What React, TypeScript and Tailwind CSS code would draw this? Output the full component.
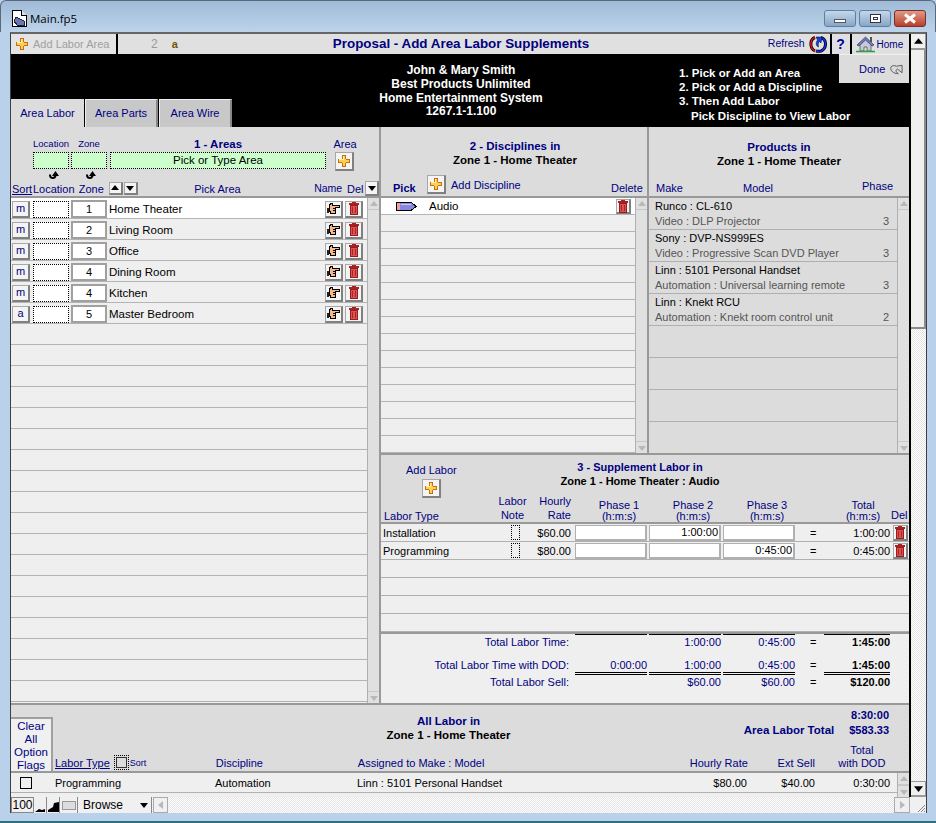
import React from "react";

const NAVY = "text-[#000080]";

function Plus({ s = 15 }: { s?: number }) {
  return (
    <svg width={s} height={s} viewBox="0 0 15 15" shapeRendering="crispEdges">
      <path d="M5.500 1.500h4v4h4v4h-4v4h-4v-4h-4v-4h4z" fill="#ffd050" stroke="#c4680e" />
      <path d="M6.500 2.500h1v4h-5v-1h4z" fill="#fff2b0" />
    </svg>
  );
}
function Trash() {
  return (
    <svg width="12" height="13" viewBox="0 0 12 13" shapeRendering="crispEdges">
      <path d="M4 0h4v1h3v2H1V1h3z" fill="#a82020" />
      <path d="M2.500 3.500h7v9h-7z" fill="#e05050" stroke="#902020" />
      <path d="M4 5h1v6H4zM7 5h1v6H7z" fill="#a82828" />
    </svg>
  );
}
function Hand() {
  return (
    <svg width="13" height="12" viewBox="0 0 13 12" shapeRendering="crispEdges">
      <path d="M3.500 0.500h2v2h7v2h-4v6h-5v-2h-1v-6z" fill="#f6b888" stroke="#000" />
      <path d="M0 5h2v5H0z" fill="#222" />
      <path d="M6 5.500h2M6 7.500h2" stroke="#000" />
    </svg>
  );
}
function Bevel({ w = 18, h = 18, children }: { w?: number; h?: number; children?: React.ReactNode }) {
  return (
    <div
      className="flex shrink-0 items-center justify-center bg-[#f4f4f4] border border-[#a8a8a8] border-b-2 border-r-2 border-b-[#808080] border-r-[#808080]"
      style={{ width: w, height: h }}
    >
      {children}
    </div>
  );
}
function Tri({ dir = "up", c = "#b8b8b8", s = 8 }: { dir?: "up" | "down" | "left" | "right"; c?: string; s?: number }) {
  const d = { up: "M4 1l4 5H0z", down: "M0 2h8L4 7z", left: "M6 0v8L1 4z", right: "M2 0v8l5-4z" }[dir];
  return (
    <svg width={s} height={s} viewBox="0 0 8 8">
      <path d={d} fill={c} />
    </svg>
  );
}
function CurveArrow() {
  return (
    <svg width="12" height="10" viewBox="0 0 12 10">
      <path d="M1 5C1 8 3 9 5 9 7 9 8 8 8.500 6H11L7.500 1 4 6h2C6 7 5 7 4.500 7 3.500 7 3 6 3 4.500H1z" fill="#000" />
    </svg>
  );
}
function ListScroll({ w = 12 }: { w?: number }) {
  return (
    <div className="flex h-full shrink-0 flex-col justify-between bg-[#e0e0e0] border-l border-[#b0b0b0]" style={{ width: w }}>
      <div className="flex h-[12px] items-center justify-center border-b border-[#c8c8c8]">
        <Tri dir="up" />
      </div>
      <div className="flex h-[12px] items-center justify-center border-t border-[#c8c8c8]">
        <Tri dir="down" />
      </div>
    </div>
  );
}

function AreaRow({ flag, zone, name, first }: { flag?: string; zone?: string; name?: string; first?: boolean }) {
  return (
    <div className={`flex h-[21px] items-center border-b border-[#b4b4b4] pt-[2px] ${first ? "bg-white" : "bg-[#efefef]"}`}>
      {name ? (
        <>
          <div className="ml-px">
            <Bevel w={18} h={17}>
              <span className="text-[11px] text-[#000080]">{flag}</span>
            </Bevel>
          </div>
          <div className="ml-[3px] h-[17px] w-[36px] border border-dotted border-black bg-white" />
          <div className="ml-[2px] flex h-[18px] w-[36px] items-center justify-center border-2 border-[#a0a0a0] bg-white text-[11px] text-black">
            {zone}
          </div>
          <span className="ml-[2px] w-[216px] text-[11.5px] leading-[15px] text-black">{name}</span>
          <Bevel w={18} h={17}>
            <Hand />
          </Bevel>
          <div className="ml-[2px]">
            <Bevel w={18} h={17}>
              <Trash />
            </Bevel>
          </div>
        </>
      ) : null}
    </div>
  );
}

function Window() {
  const areas: [string, string, string][] = [
    ["m", "1", "Home Theater"],
    ["m", "2", "Living Room"],
    ["m", "3", "Office"],
    ["m", "4", "Dining Room"],
    ["m", "4", "Kitchen"],
    ["a", "5", "Master Bedroom"],
  ];
  const products: [string, string, string][] = [
    ["Runco : CL-610", "Video : DLP Projector", "3"],
    ["Sony : DVP-NS999ES", "Video : Progressive Scan DVD Player", "3"],
    ["Linn : 5101 Personal Handset", "Automation : Universal learning remote", "3"],
    ["Linn : Knekt RCU", "Automation : Knekt room control unit", "2"],
    ["", "", ""],
    ["", "", ""],
    ["", "", ""],
    ["", "", ""],
  ];
  return (
    <div className="flex h-[823px] w-[936px] flex-col overflow-hidden font-['Liberation_Sans',Arial,sans-serif] bg-[#b9d1ea]">
      {/* title bar */}
      <div className="flex h-[32px] shrink-0 items-start rounded-t-md border-t border-x border-[#5a6a7a] bg-gradient-to-b from-[#a0bbd8] to-[#bcd3ea]">
        <div className="ml-[10px] mt-[9px]">
          <svg width="17" height="17" viewBox="0 0 17 17" shapeRendering="crispEdges">
            <path d="M1.500.5h9l5 5v11h-14z" fill="#fff" stroke="#000" />
            <path d="M10.500.5v5h5" fill="#ddd" stroke="#000" />
            <path d="M5 7l8 4v4H6l-3-4z" fill="#6a78b8" stroke="#223" />
          </svg>
        </div>
        <span className="ml-[2px] mt-[10px] font-['Open_Sans',sans-serif] text-[11.5px] leading-[16px] text-black">Main.fp5</span>
        <div className="ml-auto mr-[9px] mt-[9px] flex gap-[3px]">
          <div className="flex h-[17px] w-[32px] items-end justify-center rounded-[3px] border border-[#5f7f9f] bg-gradient-to-b from-[#c4d8ec] to-[#88a6c4] pb-[3px]">
            <div className="h-[4px] w-[12px] border border-[#556] bg-white" />
          </div>
          <div className="flex h-[17px] w-[32px] items-center justify-center rounded-[3px] border border-[#5f7f9f] bg-gradient-to-b from-[#c4d8ec] to-[#88a6c4]">
            <div className="flex h-[9px] w-[11px] items-center justify-center border border-[#334] bg-white">
              <div className="h-[3px] w-[5px] border border-[#334]" />
            </div>
          </div>
          <div className="flex h-[17px] w-[32px] items-center justify-center rounded-[3px] border border-[#7a3028] bg-gradient-to-b from-[#e09a88] to-[#b83c28]">
            <svg width="14" height="11" viewBox="0 0 14 11">
              <path d="M2 1.500l10 8M12 1.500l-10 8" stroke="#fff" strokeWidth="3" />
            </svg>
          </div>
        </div>
      </div>

      {/* client */}
      <div className="ml-[10px] mr-[9px] flex h-[781px] shrink-0 flex-col border-t-2 border-x border-[#404040] border-t-[#666]">
        <div className="flex min-h-0 flex-1">
          {/* page */}
          <div className="flex w-[898px] flex-col bg-[#dcdcdc]">
            {/* top bar */}
            <div className="flex h-[20px] shrink-0 items-center bg-[#e0e0e0]">
              <div className="flex h-full w-[107px] items-center border-r-2 border-black bg-[#e4e4e4] pl-[4px]">
                <Plus s={14} />
                <span className="ml-[4px] text-[11px] text-[#a0a0a0]">Add Labor Area</span>
              </div>
              <span className="ml-[33px] text-[12px] text-[#999]">2</span>
              <span className="ml-[14px] text-[11px] font-bold text-[#7a5000]">a</span>
              <div className={`ml-[155px] w-[260px] whitespace-nowrap text-[13.4px] font-bold ${NAVY}`}>Proposal - Add Area Labor Supplements</div>
              <span className={`ml-[175px] text-[10.5px] ${NAVY}`}>Refresh</span>
              <div className="ml-[4px] flex h-full items-center border-r-2 border-black pr-[3px]">
                <svg width="18" height="18" viewBox="0 0 18 18">
                  <path d="M6 2.500C1 4 0 13 6 16" fill="none" stroke="#000" strokeWidth="3" />
                  <path d="M6 2.500C1 4 0 13 6 16" fill="none" stroke="#e01010" strokeWidth="1.500" />
                  <path d="M12 2.500c6 2 6 11 0 13.500-2 .500-3 .500-5 0" fill="none" stroke="#000" strokeWidth="3" />
                  <path d="M12 2.500c6 2 6 11 0 13.500-2 .500-3 .500-5 0" fill="none" stroke="#1030e8" strokeWidth="1.500" />
                  <path d="M7 2h6l-1 6-1.500-1.500C9 8 9 10 9.500 12 7 11 6.500 8 8.500 5z" fill="#1040f0" stroke="#000" strokeWidth="0.500" />
                </svg>
              </div>
              <div className="flex h-full w-[20px] items-center justify-center border-r-2 border-black">
                <span className="text-[14px] font-bold leading-none text-[#0000a0]">?</span>
              </div>
              <div className="ml-[4px] flex h-full items-center">
                <svg width="19" height="17" viewBox="0 0 19 17">
                  <path d="M1 9l8.500-8 8.500 8-2 1-6.500-6L3 10z" fill="#7080c0" stroke="#333060" strokeWidth="0.700" />
                  <path d="M4 9v6h4v-4h3v4h4V9L9.500 4z" fill="#c8c8d8" stroke="#404060" strokeWidth="0.700" />
                  <path d="M0 15.500h19" stroke="#30a030" strokeWidth="1.500" />
                  <path d="M14 1h2v5h-2z" fill="#555" />
                </svg>
                <span className={`ml-[2px] text-[10px] ${NAVY}`}>Home</span>
              </div>
            </div>

            {/* black band */}
            <div className="flex h-[73px] shrink-0 bg-black">
              <div className="flex w-[289px] items-end">
                <div className={`flex h-[28px] w-[73px] items-center justify-center bg-[#dcdcdc] text-[11px] ${NAVY}`}>Area Labor</div>
                <div className={`ml-px flex h-[28px] w-[73px] items-center justify-center border-t border-l border-r-2 border-[#eee] border-r-[#888] bg-[#c8c8c8] text-[11px] ${NAVY}`}>Area Parts</div>
                <div className={`ml-px flex h-[28px] w-[73px] items-center justify-center border-t border-l border-r-2 border-[#eee] border-r-[#888] bg-[#c8c8c8] text-[11px] ${NAVY}`}>Area Wire</div>
              </div>
              <div className="w-[322px] pt-[9px] text-center text-[12px] font-bold leading-[14px] text-white">
                <div>John &amp; Mary Smith</div>
                <div>Best Products Unlimited</div>
                <div>Home Entertainment System</div>
                <div className="leading-[13px]">1267.1-1.100</div>
              </div>
              <div className="ml-[57px] w-[159px] pt-[12px] text-[11.5px] font-bold leading-[14px] text-white">
                <div>1. Pick or Add an Area</div>
                <div>2. Pick or Add a Discipline</div>
                <div>3. Then Add Labor</div>
                <div className="whitespace-nowrap pl-[12px] pt-px">Pick Discipline to View Labor</div>
              </div>
              <div className="ml-auto flex h-[29px] w-[70px] items-center bg-[#dcdcdc] border-t border-[#f0f0f0] pl-[20px]">
                <span className={`text-[11px] ${NAVY}`}>Done</span>
                <svg className="ml-[4px] shrink-0" width="14" height="11" viewBox="0 0 15 11">
                  <path d="M14 1v8L9 5c-2 1-2 3 1 5-5 0-9-3-8-7 1-2 4-2 6-1z" fill="#d8d8e0" stroke="#555" />
                </svg>
              </div>
            </div>

            {/* middle */}
            <div className="flex h-[576px] shrink-0">
              {/* left */}
              <div className="flex w-[370px] shrink-0 flex-col border-r-2 border-[#999]">
                <div className="h-[71px] shrink-0 border-b-2 border-[#999]">
                  <div className={`flex h-[25px] items-end pb-[2px] pl-[22px] ${NAVY}`}>
                    <span className="w-[36px] text-center text-[9.5px] leading-[12px]">Location</span>
                    <span className="ml-[2px] w-[36px] text-center text-[9.5px] leading-[12px]">Zone</span>
                    <span className="ml-[3px] w-[216px] text-center text-[11.5px] font-bold leading-[12px]">1 - Areas</span>
                    <span className="w-[38px] text-center text-[11px] leading-[12px]">Area</span>
                  </div>
                  <div className="flex h-[18px] pl-[22px]">
                    <div className="h-[17px] w-[36px] border border-dotted border-black bg-[#ccffcc]" />
                    <div className="ml-[2px] h-[17px] w-[36px] border border-dotted border-black bg-[#ccffcc]" />
                    <div className="ml-[3px] flex h-[17px] w-[216px] items-center justify-center border border-dotted border-black bg-[#ccffcc] text-[11.5px] text-black">Pick or Type Area</div>
                    <div className="ml-[9px]">
                      <Bevel w={19} h={19}>
                        <Plus s={14} />
                      </Bevel>
                    </div>
                  </div>
                  <div className="flex h-[11px] pl-[22px]">
                    <div className="flex w-[36px] justify-center pl-[5px]"><CurveArrow /></div>
                    <div className="ml-[2px] flex w-[36px] justify-center pl-[4px]"><CurveArrow /></div>
                  </div>
                  <div className={`flex h-[15px] items-center pl-px text-[11px] ${NAVY}`}>
                    <span className="w-[21px] pt-px underline">Sort</span>
                    <span className="w-[46px] pt-px">Location</span>
                    <span className="w-[30px] pt-px">Zone</span>
                    <div className="flex gap-px">
                      <Bevel w={14} h={13}><Tri dir="up" c="#000" /></Bevel>
                      <Bevel w={14} h={13}><Tri dir="down" c="#000" /></Bevel>
                    </div>
                    <span className="w-[160px] pt-px text-center">Pick Area</span>
                    <span className="ml-[17px] w-[33px] text-[10.5px]">Name</span>
                    <span className="w-[18px] pt-px">Del</span>
                    <Bevel w={14} h={15}><Tri dir="down" c="#000" /></Bevel>
                  </div>
                </div>
                <div className="flex min-h-0 flex-1 bg-[#efefef]">
                  <div className="flex-1 overflow-hidden">
                    {Array.from({ length: 24 }).map((_, i) => {
                      const a = areas[i];
                      return a ? (
                        <AreaRow key={i} flag={a[0]} zone={a[1]} name={a[2]} first={i === 0} />
                      ) : (
                        <AreaRow key={i} />
                      );
                    })}
                  </div>
                  <ListScroll />
                </div>
              </div>

              {/* right */}
              <div className="flex min-w-0 flex-1 flex-col">
                <div className="flex h-[326px] shrink-0">
                  {/* disciplines */}
                  <div className="flex w-[268px] shrink-0 flex-col border-r-2 border-[#999]">
                    <div className="h-[71px] shrink-0 border-b-2 border-[#999]">
                      <div className={`h-[48px] pl-[2px] pt-[12px] text-center text-[11.5px] font-bold leading-[14px] ${NAVY}`}>
                        <div>2 - Disciplines in</div>
                        <div className="text-black">Zone 1 - Home Theater</div>
                      </div>
                      <div className={`flex h-[21px] items-start ${NAVY}`}>
                        <span className="ml-[12px] mt-[7px] w-[34px] text-[11px] font-bold leading-[13px]">Pick</span>
                        <Bevel w={19} h={19}><Plus s={14} /></Bevel>
                        <span className="ml-[5px] mt-[4px] w-[160px] text-[11px] leading-[13px]">Add Discipline</span>
                        <span className="mt-[7px] text-[11px] leading-[13px]">Delete</span>
                      </div>
                    </div>
                    <div className="flex min-h-0 flex-1 bg-[#efefef]">
                      <div className="flex-1 overflow-hidden">
                        <div className="flex h-[17px] items-center border-b border-[#b4b4b4] bg-white pt-px">
                          <svg className="ml-[15px] shrink-0" width="21" height="9" viewBox="0 0 21 9" shapeRendering="crispEdges">
                            <path d="M0.500.5h15l4.500 4-4.500 3.500h-15z" fill="#8888dd" stroke="#000" />
                            <path d="M1 1h3v7H1z" fill="#f0a0a0" />
                            <path d="M5 2h10v1H5z" fill="#c8c8ff" />
                          </svg>
                          <span className="ml-[12px] w-[187px] text-[11.5px] leading-[13px] text-black">Audio</span>
                          <Bevel w={15} h={15}><Trash /></Bevel>
                        </div>
                        {Array.from({ length: 14 }).map((_, i) => (
                          <div key={i} className="h-[17px] border-b border-[#b4b4b4]" />
                        ))}
                      </div>
                      <ListScroll />
                    </div>
                  </div>
                  {/* products */}
                  <div className="flex min-w-0 flex-1 flex-col">
                    <div className="h-[71px] shrink-0 border-b-2 border-[#999]">
                      <div className={`h-[47px] pt-[13px] text-center text-[11.5px] font-bold leading-[14px] ${NAVY}`}>
                        <div>Products in</div>
                        <div className="text-black">Zone 1 - Home Theater</div>
                      </div>
                      <div className={`flex h-[22px] items-end text-[11px] ${NAVY}`}>
                        <span className="ml-[7px] w-[87px]">Make</span>
                        <span className="w-[119px]">Model</span>
                        <span className="mb-[2px]">Phase</span>
                      </div>
                    </div>
                    <div className="flex min-h-0 flex-1">
                      <div className="flex-1 overflow-hidden">
                        {products.map((p, i) => (
                          <div key={i} className="h-[32px] border-b border-[#b0b0b0] pl-[6px] pr-[8px] text-[11px] leading-[15px]">
                            <div className="pt-px text-black">{p[0]}</div>
                            <div className="flex justify-between text-[#555]">
                              <span>{p[1]}</span>
                              <span>{p[2]}</span>
                            </div>
                          </div>
                        ))}
                      </div>
                      <ListScroll />
                    </div>
                  </div>
                </div>

                {/* supplement */}
                <div className="flex h-[250px] shrink-0 flex-col border-t-2 border-[#999] bg-[#efefef]">
                  <div className="flex h-[69px] shrink-0 items-stretch border-b-2 border-[#999] bg-[#dcdcdc]">
                    <div className={`w-[110px] shrink-0 text-[11px] ${NAVY}`}>
                      <div className="pl-[25px] pt-[9px] leading-[13px]">Add Labor</div>
                      <div className="ml-[41px] mt-[2px]"><Bevel w={19} h={19}><Plus s={14} /></Bevel></div>
                      <div className="pl-[3px] pt-[12px] leading-[13px]">Labor Type</div>
                    </div>
                    <div className="flex-1">
                      <div className={`h-[34px] pt-[5px] text-center text-[11px] font-bold leading-[14px] ${NAVY}`}>
                        <div className="-ml-[120px]">3 - Supplement Labor in</div>
                        <div className="-ml-[120px] text-black">Zone 1 - Home Theater : Audio</div>
                      </div>
                      <div className={`flex h-[33px] items-end text-[11px] leading-[14px] ${NAVY}`}>
                        <div className="ml-[5px] w-[33px] text-center">Labor<br />Note</div>
                        <div className="w-[42px] text-right">Hourly<br />Rate</div>
                        <div className="ml-[12px] w-[72px] text-center leading-[11px]">Phase 1<br />(h:m:s)</div>
                        <div className="ml-[2px] w-[72px] text-center leading-[11px]">Phase 2<br />(h:m:s)</div>
                        <div className="ml-[2px] w-[72px] text-center leading-[11px]">Phase 3<br />(h:m:s)</div>
                        <div className="ml-[26px] w-[68px] text-center leading-[11px]">Total<br />(h:m:s)</div>
                        <div className="-ml-[6px]">Del</div>
                      </div>
                    </div>
                  </div>
                  {[
                    ["Installation", "$60.00", "", "1:00:00", "", "1:00:00"],
                    ["Programming", "$80.00", "", "", "0:45:00", "0:45:00"],
                    null,
                    null,
                    null,
                    null,
                  ].map((r, i) => (
                    <div key={i} className="flex h-[18px] shrink-0 items-center border-b border-[#b0b0b0] text-[11px] leading-[15px] text-black">
                      {r ? (
                        <>
                          <span className="w-[130px] pl-[2px] pt-[2px]">{r[0]}</span>
                          <div className="h-[15px] w-[9px] border border-dotted border-black" />
                          <span className="w-[51px] pt-[2px] text-right">{r[1]}</span>
                          <div className="ml-[4px] flex h-[16px] w-[72px] items-center justify-end border border-b-2 border-r-2 border-[#b0b0b0] bg-white pr-px">{r[2]}</div>
                          <div className="ml-[2px] flex h-[16px] w-[72px] items-center justify-end border border-b-2 border-r-2 border-[#b0b0b0] bg-white pr-px">{r[3]}</div>
                          <div className="ml-[2px] flex h-[16px] w-[72px] items-center justify-end border border-b-2 border-r-2 border-[#b0b0b0] bg-white pr-px">{r[4]}</div>
                          <span className="ml-[15px] w-[10px] pt-[2px]">=</span>
                          <span className="w-[70px] pt-[2px] text-right">{r[5]}</span>
                          <div className="ml-[3px]"><Bevel w={15} h={16}><Trash /></Bevel></div>
                        </>
                      ) : null}
                    </div>
                  ))}
                  <div className={`flex min-h-0 flex-1 flex-col border-t-2 border-[#999] text-[11px] leading-[15px] ${NAVY}`}>
                    <div className="flex h-[23px]">
                      <span className="w-[188px] pt-px text-right">Total Labor Time:</span>
                      <div className="ml-[6px] h-px w-[72px] bg-black" />
                      <div className="ml-[2px] h-fit w-[72px] border-t border-black text-right">1:00:00</div>
                      <div className="ml-[2px] h-fit w-[72px] border-t border-black text-right">0:45:00</div>
                      <span className="ml-[15px] w-[14px] pt-px text-black">=</span>
                      <div className="h-fit w-[66px] border-t border-black text-right font-bold text-black">1:45:00</div>
                    </div>
                    <div className="flex h-[18px] items-end leading-[13px]">
                      <span className="w-[188px] pb-[3px] text-right">Total Labor Time with DOD:</span>
                      <div className="ml-[6px] w-[72px] border-b-[3px] border-double border-black text-right">0:00:00</div>
                      <div className="ml-[2px] w-[72px] border-b-[3px] border-double border-black text-right">1:00:00</div>
                      <div className="ml-[2px] w-[72px] border-b-[3px] border-double border-black text-right">0:45:00</div>
                      <span className="ml-[15px] w-[14px] pb-[3px] text-black">=</span>
                      <div className="w-[66px] border-b-[3px] border-double border-black text-right font-bold text-black">1:45:00</div>
                    </div>
                    <div className="flex h-[15px] items-center">
                      <span className="w-[188px] text-right">Total Labor Sell:</span>
                      <div className="ml-[6px] w-[72px]" />
                      <div className="ml-[2px] w-[72px] text-right">$60.00</div>
                      <div className="ml-[2px] w-[72px] text-right">$60.00</div>
                      <span className="ml-[15px] w-[14px] text-black">=</span>
                      <div className="w-[66px] text-right font-bold text-black">$120.00</div>
                    </div>
                  </div>
                </div>
              </div>
            </div>

            {/* all labor */}
            <div className="flex h-[70px] shrink-0 border-y-2 border-[#999] bg-[#dcdcdc]">
              <div className="flex h-[66px] flex-col justify-end">
                <div className={`h-[54px] w-[42px] border-t-2 border-r-2 border-[#a0a0a0] bg-[#f0f0f0] pt-px text-center text-[11.5px] leading-[13px] ${NAVY}`}>
                  Clear<br />All<br />Option<br />Flags
                </div>
              </div>
              <div className={`flex min-w-0 flex-1 flex-col text-[11px] ${NAVY}`}>
                <div className="flex h-[42px]">
                  <div className="w-[689px] pl-[102px] pt-[9px] text-center text-[11.5px] font-bold leading-[14px]">
                    <div>All Labor in</div>
                    <div className="text-black">Zone 1 - Home Theater</div>
                  </div>
                  <div className="w-[148px] pt-[3px] font-bold">
                    <div className="pr-px text-right leading-[15px]">8:30:00</div>
                    <div className="flex items-baseline justify-end gap-[15px] pr-px leading-[15px]">
                      <span className="whitespace-nowrap text-[11.5px]">Area Labor Total</span>
                      <span>$583.33</span>
                    </div>
                  </div>
                </div>
                <div className="flex h-[24px] items-end pb-[1px] leading-[13px]">
                  <span className="ml-[2px] underline">Labor Type</span>
                  <div className="ml-[4px] flex h-[15px] w-[15px] items-center justify-center border border-dotted border-black">
                    <div className="h-[11px] w-[11px] border border-[#333]" />
                  </div>
                  <span className="ml-[1px] w-[86px] text-[9px]">Sort</span>
                  <span className="w-[142px]">Discipline</span>
                  <span className="w-[255px]">Assigned to Make : Model</span>
                  <span className="w-[135px] text-right">Hourly Rate</span>
                  <span className="w-[67px] text-right">Ext Sell</span>
                  <span className="w-[94px] text-center">Total<br />with DOD</span>
                </div>
              </div>
            </div>
            {/* bottom row */}
            <div className="flex h-[24px] shrink-0 bg-[#efefef]">
              <div className="flex-1">
                <div className="flex h-[20px] items-center border-b border-[#b0b0b0] pt-px text-[11px] text-black">
                  <div className="ml-[9px] h-[12px] w-[12px] border border-black" />
                  <span className="ml-[23px] w-[160px]">Programming</span>
                  <span className="w-[142px]">Automation</span>
                  <span className="w-[255px]">Linn : 5101 Personal Handset</span>
                  <span className="w-[135px] text-right">$80.00</span>
                  <span className="w-[68px] text-right">$40.00</span>
                  <span className="w-[75px] text-right">0:30:00</span>
                </div>
              </div>
              <div className="w-[12px]"><ListScroll /></div>
            </div>
          </div>

          {/* main vertical scrollbar */}
          <div className="flex w-[17px] shrink-0 flex-col border-l-2 border-black bg-[repeating-conic-gradient(#e4e4e4_0_25%,#ffffff_0_50%)] bg-[length:2px_2px]">
            <div className="flex h-[16px] items-center justify-center border-b-2 border-r border-[#999] bg-[#f0f0f0]">
              <Tri dir="up" c="#000" s={9} />
            </div>
            <div className="h-[279px] shrink-0 border-b-2 border-r-2 border-[#8c8c8c] bg-[#f0f0f0]" />
            <div className="flex-1" />
            <div className="flex h-[16px] items-center justify-center border-t border-b-2 border-r border-[#999] bg-[#f0f0f0]">
              <Tri dir="down" c="#000" s={9} />
            </div>
          </div>
        </div>

        {/* status bar */}
        <div className="flex h-[16px] shrink-0 items-center bg-[repeating-conic-gradient(#e4e4e4_0_25%,#ffffff_0_50%)] bg-[length:2px_2px]">
          <div className="flex h-full w-[23px] items-center justify-center border border-[#888] bg-[#f0f0f0] text-[12px] text-black">100</div>
          <div className="flex h-full w-[13px] items-end justify-center border-r border-[#888] bg-[#f0f0f0] pb-px">
            <svg width="10" height="6" viewBox="0 0 10 6"><path d="M0 6l4-3 3 1 3-1v3z" fill="#000" /></svg>
          </div>
          <div className="flex h-full w-[13px] items-end justify-center border-r border-[#888] bg-[#f0f0f0] pb-px">
            <svg width="11" height="10" viewBox="0 0 11 10"><path d="M0 10V8l5-3 1-4 5-1v10z" fill="#000" /></svg>
          </div>
          <div className="flex h-full w-[18px] items-center justify-center border-r border-[#888] bg-[#f0f0f0]">
            <div className="h-[9px] w-[14px] border border-[#999] bg-[#ddd]" />
          </div>
          <div className="ml-[2px] flex h-full w-[72px] items-center justify-between border-r border-[#888] bg-[#f0f0f0] px-[3px] text-[12px] text-black">
            <span>Browse</span>
            <Tri dir="down" c="#000" />
          </div>
          <div className="ml-px flex h-full w-[15px] items-center justify-center border border-[#aaa] bg-[#f0f0f0]">
            <Tri dir="left" />
          </div>
          <div className="ml-auto flex h-full w-[16px] items-center justify-center border border-[#aaa] bg-[#f0f0f0]">
            <Tri dir="right" />
          </div>
          <div className="flex h-full w-[16px] items-end justify-end bg-[#f0f0f0]">
            <svg width="10" height="10" viewBox="0 0 10 10"><path d="M9 2L2 9M9 5L5 9M9 8L8 9" stroke="#888" /></svg>
          </div>
        </div>
      </div>
      <div className="flex-1 border-b-2 border-[#2f6f80] bg-[#b9d1ea]" />
    </div>
  );
}

export default function App() {
  return <Window />;
}
